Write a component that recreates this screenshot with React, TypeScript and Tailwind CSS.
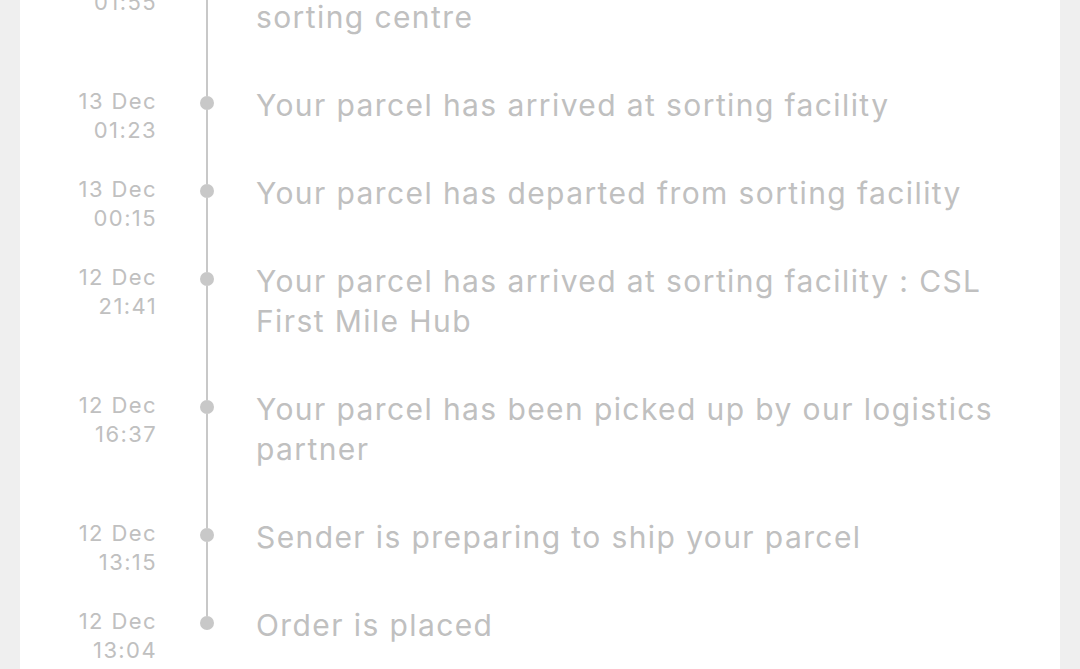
import React from "react";

type Event = { day: string; time: string; text: React.ReactNode };

const events: Event[] = [
  {
    day: "13 Dec",
    time: "01:55",
    text: (
      <>
        Your parcel has departed from the origin
        <br />
        sorting centre
      </>
    ),
  },
  { day: "13 Dec", time: "01:23", text: "Your parcel has arrived at sorting facility" },
  { day: "13 Dec", time: "00:15", text: "Your parcel has departed from sorting facility" },
  { day: "12 Dec", time: "21:41", text: "Your parcel has arrived at sorting facility : CSL First Mile Hub" },
  { day: "12 Dec", time: "16:37", text: "Your parcel has been picked up by our logistics partner" },
  { day: "12 Dec", time: "13:15", text: "Sender is preparing to ship your parcel" },
  { day: "12 Dec", time: "13:04", text: "Order is placed" },
];

function Row({ ev, last }: { ev: Event; last: boolean }) {
  return (
    <div className="flex items-stretch">
      {/* date */}
      <div className="w-[137px] shrink-0 pt-[4px] text-right text-[22px] leading-[29px] tracking-[1.4px] text-[#c0c0c0]">
        <div>{ev.day}</div>
        <div>{ev.time}</div>
      </div>

      {/* timeline */}
      <div className="w-[99px] shrink-0 flex flex-col items-center">
        <div className="w-[2px] h-[13px] bg-[#c8c8c8]" />
        <div className="w-[14px] h-[14px] rounded-full bg-[#c8c8c8]" />
        {!last && <div className="w-[2px] flex-1 bg-[#c8c8c8]" />}
      </div>

      {/* message */}
      <div className="flex-1 pr-[40px] pt-[2px] pb-[46px] text-[30px] leading-[40px] tracking-[1.4px] text-[#c0c0c0]">
        {ev.text}
      </div>
    </div>
  );
}

export default function App() {
  return (
    <div
      className="h-[669px] w-[1080px] overflow-hidden bg-[#efefef]"
      style={{ fontFamily: "Inter, 'Noto Sans', sans-serif" }}
    >
      <div className="ml-[20px] w-[1040px] h-full bg-white overflow-hidden">
        <div className="-mt-[45px]">
          {events.map((ev, i) => (
            <Row key={i} ev={ev} last={i === events.length - 1} />
          ))}
        </div>
      </div>
    </div>
  );
}
